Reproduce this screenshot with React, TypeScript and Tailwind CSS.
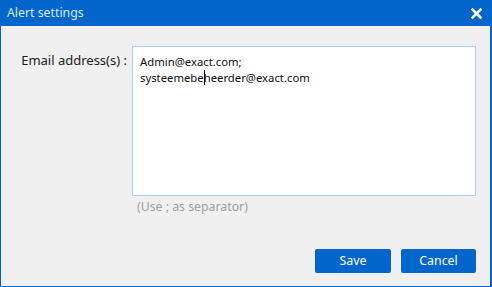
export default function App() {
  const font = { fontFamily: '"Segoe UI", "Noto Sans", "Open Sans", sans-serif' };
  return (
    <div className="w-[492px] h-[287px] bg-[#f0f0f0] flex flex-col border-l border-r-2 border-b border-[#0066cc] text-[13px] text-[#222]" style={font}>
      <div className="h-[26px] bg-[#0066cc] flex items-center justify-between pl-[6px] pr-[8px] shrink-0">
        <span className="text-[#dbe8f6] text-[12.3px] leading-none">Alert settings</span>
        <svg width="11" height="11" viewBox="0 0 11 11">
          <path d="M1.5 1.5 L9.5 9.5 M9.5 1.5 L1.5 9.5" stroke="white" strokeWidth="2.6" strokeLinecap="square" />
        </svg>
      </div>
      <div className="flex pt-[20px]">
        <div className="w-[131px] pr-[5px] text-right pt-[5px] leading-[18px]">Email address(s) :</div>
        <div className="flex flex-col">
          <div className="w-[344px] h-[150px] bg-white border border-[#a9cdef] px-[7px] pt-[7px] leading-[16px] text-[11.3px] text-[#111]">
            <div>Admin@exact.com;</div>
            <div>systeemebe<span className="border-l border-black -mr-px"></span>heerder@exact.com</div>
          </div>
          <div className="text-[#a0a0a0] text-[12.3px] mt-[2px] pl-[5px] leading-[18px]">(Use ; as separator)</div>
        </div>
      </div>
      <div className="flex-1" />
      <div className="flex justify-end gap-[10px] pr-[14px] pb-[13px]">
        <button className="w-[76px] h-[24px] bg-[#0066cc] text-white rounded-[2px] text-[12.4px] leading-none">Save</button>
        <button className="w-[75px] h-[24px] bg-[#0066cc] text-white rounded-[2px] text-[12.4px] leading-none">Cancel</button>
      </div>
    </div>
  );
}
